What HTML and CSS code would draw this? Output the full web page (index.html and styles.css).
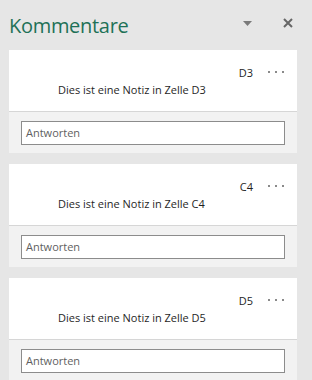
FILE: index.html
```html
<!DOCTYPE html>
<html lang="de">
<head>
<meta charset="utf-8">
<link rel="stylesheet" href="styles.css">
</head>
<body>
<div class="pane">
  <header class="pane-header">
    <h1 class="pane-title">Kommentare</h1>
    <div class="pane-actions">
      <svg class="icon-caret" width="9" height="5" viewBox="0 0 9 5"><path d="M0 0H9L4.5 5Z" fill="#7a7a7a"/></svg>
      <svg class="icon-close" width="10" height="10" viewBox="0 0 10 10"><path d="M1 1L9 9M9 1L1 9" stroke="#666" stroke-width="2"/></svg>
    </div>
  </header>
  <div class="list">
    <div class="card">
      <div class="card-body">
        <div class="card-meta"><span class="cell">D3</span><span class="more"><i></i><i></i><i></i></span></div>
        <div class="note">Dies ist eine Notiz in Zelle D3</div>
      </div>
      <div class="card-foot"><div class="reply">Antworten</div></div>
    </div>
    <div class="card">
      <div class="card-body">
        <div class="card-meta"><span class="cell">C4</span><span class="more"><i></i><i></i><i></i></span></div>
        <div class="note">Dies ist eine Notiz in Zelle C4</div>
      </div>
      <div class="card-foot"><div class="reply">Antworten</div></div>
    </div>
    <div class="card">
      <div class="card-body">
        <div class="card-meta"><span class="cell">D5</span><span class="more"><i></i><i></i><i></i></span></div>
        <div class="note">Dies ist eine Notiz in Zelle D5</div>
      </div>
      <div class="card-foot"><div class="reply">Antworten</div></div>
    </div>
  </div>
</div>
</body>
</html>
```
FILE: styles.css
```css
html, body {
  margin: 0;
  padding: 0;
  background: #e6e6e6;
  overflow: hidden;
}
.pane {
  width: 312px;
  height: 380px;
  font-family: "Open Sans", "Liberation Sans", sans-serif;
  color: #1f1f1f;
}
.pane-header {
  height: 50px;
  display: flex;
  align-items: flex-start;
  justify-content: space-between;
  padding: 0 0 0 9px;
  box-sizing: border-box;
}
.pane-title {
  margin: 12px 0 0 0;
  font-weight: 400;
  font-size: 20px;
  line-height: 28px;
  color: #1e7157;
  letter-spacing: -0.3px;
}
.pane-actions {
  display: flex;
  align-items: center;
  gap: 31px;
  margin: 18px 19px 0 0;
}
.icon-caret { margin-top: 1px; }
.list {
  display: flex;
  flex-direction: column;
  gap: 11px;
  padding-left: 9px;
}
.card {
  width: 288px;
  height: 103px;
  display: flex;
  flex-direction: column;
}
.card-body {
  background: #fff;
  height: 62px;
  border-bottom: 1px solid #d6d6d6;
  box-sizing: border-box;
  padding-top: 14px;
}
.card-meta {
  display: flex;
  justify-content: flex-end;
  align-items: center;
  height: 16px;
  padding-right: 13px;
  font-size: 11px;
}
.cell { margin-right: 15px; }
.more { display: flex; gap: 5px; }
.more i {
  display: block;
  width: 2px;
  height: 2px;
  background: #8a8a8a;
}
.note {
  margin-top: 2px;
  padding-left: 49px;
  font-size: 11px;
  line-height: 16px;
}
.card-foot {
  flex: 1;
  background: #f2f2f2;
  padding: 9px 12px 0 12px;
}
.reply {
  height: 24px;
  box-sizing: border-box;
  border: 1px solid #8c8c8c;
  background: #fff;
  font-size: 11px;
  line-height: 22px;
  padding-left: 4px;
  color: #5f5f5f;
}
```
